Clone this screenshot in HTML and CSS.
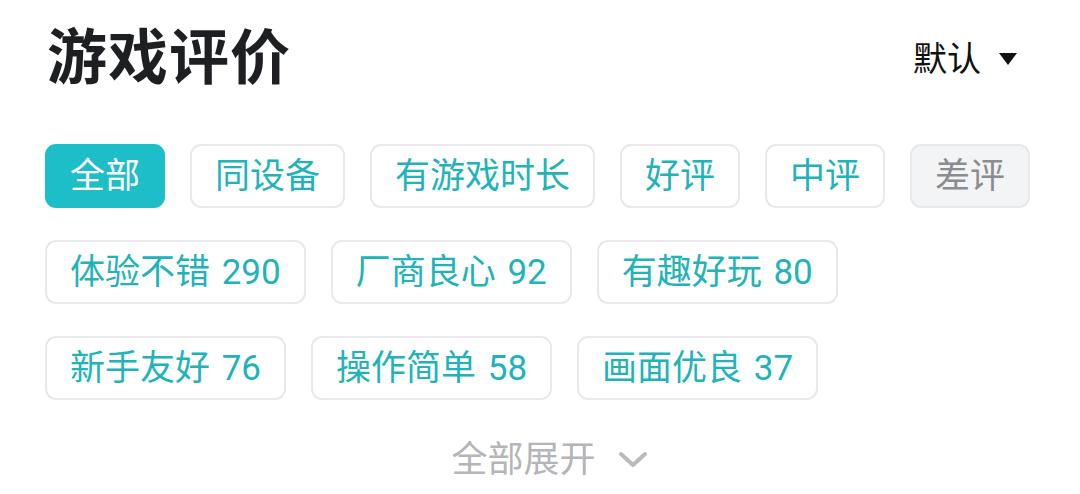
FILE: index.html
```html
<!DOCTYPE html>
<html lang="zh-CN">
<head>
  <meta charset="UTF-8">
  <title>游戏评价</title>
  <link rel="stylesheet" href="styles.css">
</head>
<body>
  <div class="review">
    <div class="review-head">
      <h1>游戏评价</h1>
      <div class="sort">
        <span>默认</span>
        <svg class="sort-arrow" width="18" height="12" viewBox="0 0 18 12"><path d="M0 0 H18 L9 12 Z" fill="#111"/></svg>
      </div>
    </div>

    <div class="chips">
      <span class="chip active">全部</span>
      <span class="chip">同设备</span>
      <span class="chip">有游戏时长</span>
      <span class="chip">好评</span>
      <span class="chip">中评</span>
      <span class="chip muted">差评</span>
      <span class="chip">体验不错 290</span>
      <span class="chip">厂商良心 92</span>
      <span class="chip">有趣好玩 80</span>
      <span class="chip">新手友好 76</span>
      <span class="chip">操作简单 58</span>
      <span class="chip">画面优良 37</span>
    </div>

    <div class="expand">
      <span>全部展开</span>
      <svg width="30" height="18" viewBox="0 0 30 18"><path d="M3 3 L15 14 L27 3" fill="none" stroke="#b9bbbd" stroke-width="4" stroke-linecap="round" stroke-linejoin="round"/></svg>
    </div>
  </div>
</body>
</html>
```

FILE: styles.css
```css
body {
  margin: 0;
  background: #fff;
  font-family: Roboto, "Noto Sans CJK SC", sans-serif;
  color: #1d1f22;
}

.review {
  width: 1080px;
  box-sizing: border-box;
  padding: 18px 40px 0 45px;
}

.review-head {
  display: flex;
  justify-content: space-between;
  align-items: center;
  height: 82px;
}

h1 {
  margin: 0;
  font-size: 60px;
  font-weight: 700;
  line-height: 1;
  letter-spacing: 1px;
  padding-left: 2px;
}

.sort {
  display: flex;
  align-items: center;
  gap: 18px;
  margin-right: 23px;
  font-size: 34px;
  line-height: 1;
  color: #111;
}

.chips {
  display: flex;
  flex-wrap: wrap;
  gap: 32px 25px;
  margin-top: 44px;
}

.chip {
  display: inline-flex;
  align-items: center;
  height: 64px;
  box-sizing: border-box;
  padding: 0 23px;
  border: 2px solid #e7e9eb;
  border-radius: 11px;
  font-size: 35px;
  line-height: 1;
  word-spacing: 3px;
  color: #22b3b9;
  background: #fff;
}

.chip.active {
  background: #1ebec8;
  border-color: #1ebec8;
  color: #fff;
}

.chip.muted {
  background: #f3f4f6;
  color: #8a8c8f;
}

.expand {
  display: flex;
  justify-content: center;
  align-items: center;
  gap: 22px;
  margin-top: 42px;
  padding-left: 14px;
  font-size: 36px;
  line-height: 1;
  color: #b3b5b8;
}
```
